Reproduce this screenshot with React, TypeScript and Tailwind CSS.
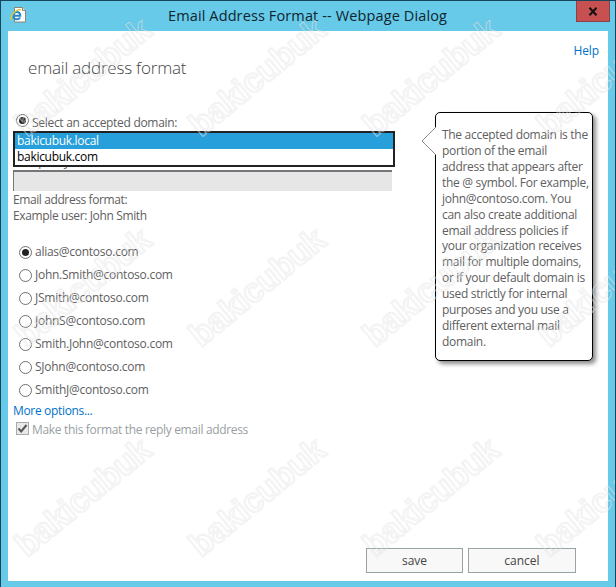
const formats = [
  "alias@contoso.com",
  "John.Smith@contoso.com",
  "JSmith@contoso.com",
  "JohnS@contoso.com",
  "Smith.John@contoso.com",
  "SJohn@contoso.com",
  "SmithJ@contoso.com",
];

const helpLines = [
  "The accepted domain is the",
  "portion of the email",
  "address that appears after",
  "the @ symbol. For example,",
  "john@contoso.com. You",
  "can also create additional",
  "email address policies if",
  "your organization receives",
  "mail for multiple domains,",
  "or if your default domain is",
  "used strictly for internal",
  "purposes and you use a",
  "different external mail",
  "domain.",
];

const Radio = ({ checked = false }: { checked?: boolean }) => (
  <svg className="shrink-0" width="13" height="13" viewBox="0 0 13 13">
    <circle cx="6.5" cy="6.5" r="6" fill="#fff" stroke="#707070" />
    {checked && <circle cx="6.5" cy="6.5" r="3.5" fill="#222" />}
  </svg>
);

const PageIcon = () => (
  <svg width="18" height="18" viewBox="0 0 18 18" fill="none">
    <path d="M4.500 1.500h8l3 3v11.500h-11z" fill="#fff" stroke="#8b8576" />
    <path d="M12.500 1.500v3h3" fill="#eee" stroke="#8b8576" />
    <path
      d="M3.500 9.700h6.800c0-2.400-1.400-3.700-3.400-3.700-2.100 0-3.500 1.400-3.500 3.700s1.400 3.600 3.500 3.600c1.500 0 2.500-.5 3.200-1.700"
      stroke="#2689cf"
      strokeWidth="2"
    />
    <path
      d="M2.200 13.800C.2 13 .8 9.700 3.800 6.700 6.800 3.900 9.900 2.900 10.900 4"
      stroke="#e5c72d"
      strokeWidth="1.500"
    />
  </svg>
);

const TitleBar = () => (
  <div className="flex h-[30px] items-start pl-[9px] pr-[5px]">
    <div className="w-[82px] pt-[5px]">
      <PageIcon />
    </div>
    <div className="flex-1 pl-[76px] pt-[4px] text-[14.500px] leading-[22px] tracking-[0.12px] text-[#10252e]">
      <span className="whitespace-nowrap">Email Address Format -- Webpage Dialog</span>
    </div>
    <button className="flex h-[21px] w-[34px] items-center justify-center border border-t-0 border-[#8b4145] bg-[#c75050]">
      <svg width="10" height="9" viewBox="0 0 10 9">
        <path d="M1.500.800l7 7.400M8.500.800l-7 7.400" stroke="#111" strokeWidth="2" />
      </svg>
    </button>
  </div>
);

const DomainForm = () => (
  <div className="w-[387px] pl-[5px] pt-[15px]">
    <label className="flex h-[16px] items-center gap-[3px] pl-[3px]">
      <span className="mb-[3px]">
        <Radio checked />
      </span>
      <span className="pt-[2px]">Select an accepted domain:</span>
    </label>
    {/* open domain list */}
    <div className="mt-px h-[36px] border-2 border-[#222] bg-white leading-4 tracking-[-0.3px]">
      <div className="h-4 bg-[#269fda] pl-0.5 text-white">bakicubuk.local</div>
      <div className="h-4 pl-0.5 text-black">bakicubuk.com</div>
    </div>
    {/* only the descenders of this label show under the list */}
    <div className="flex h-[3px] items-end overflow-hidden pl-[19px]">
      <span className="mb-[3px] leading-[10px]">Specify</span>
    </div>
    <div className="h-[21px] w-[379px] border-l border-t-2 border-[#77747a] bg-[#e6e6e6]" />
    <p className="mt-[1px] leading-4 tracking-[-0.4px]">Email address format:</p>
    <p className="leading-4 tracking-[-0.37px]">Example user: John Smith</p>
    <div className="mt-[17px] pl-[6px]">
      {formats.map((address, i) => (
        <label key={address} className="flex h-[23px] items-center gap-[3px]">
          <Radio checked={i === 0} />
          <span className="mb-px whitespace-nowrap tracking-[-0.26px]">{address}</span>
        </label>
      ))}
    </div>
    <a className="block leading-[18px] tracking-[-0.33px] text-[#0072c6]">More options...</a>
    <label className="flex h-[20px] items-center gap-[3px] pl-[3px] text-[#98a0a3]">
      <span className="mb-[4px] flex size-[13px] items-center justify-center border border-[#aaa] bg-[#e8e8e8]">
        <svg width="11" height="11" viewBox="0 0 11 11" fill="none">
          <path d="M1.500 5.500l2.700 3L9.500 2" stroke="#555" strokeWidth="2" />
        </svg>
      </span>
      <span className="whitespace-nowrap tracking-[-0.33px]">Make this format the reply email address</span>
    </label>
  </div>
);

const Callout = () => (
  <aside className="relative ml-[40px] mt-[13px] h-[249px] w-[158px] rounded-[5px] border border-black bg-white pl-[6px] pt-[14px] shadow-[3px_3px_4px_rgba(0,0,0,0.45)]">
    <svg className="absolute left-[-15px] top-[13px]" width="16" height="30" viewBox="0 0 16 30">
      <path d="M15 1L1 15l14 14" fill="#fff" stroke="#8a8a8a" />
    </svg>
    {helpLines.map((line) => (
      <p key={line} className="h-[15.930px] whitespace-nowrap leading-4 tracking-[-0.3px]">
        {line}
      </p>
    ))}
  </aside>
);

// outlined site name repeated over the whole window
const Watermark = () => (
  <svg className="pointer-events-none absolute inset-0" width="616" height="587">
    {[0, 1, 2].map((row) =>
      [0, 1, 2, 3].map((col) => (
        <g key={`${row}-${col}`} transform={`translate(${26 + col * 174} ${137 + row * 210}) rotate(-39.500)`}>
          {["#888888", "#ffffff"].map((color, i) => (
            <text
              key={color}
              textLength="164"
              lengthAdjust="spacingAndGlyphs"
              fontFamily="Liberation Sans, sans-serif"
              fontWeight="bold"
              fontSize="34"
              fill="none"
              stroke={color}
              strokeLinejoin="round"
              strokeWidth={i ? 0.9 : 2.2}
              strokeOpacity={i ? 0.5 : 0.14}
            >
              bakicubuk
            </text>
          ))}
        </g>
      ))
    )}
  </svg>
);

const App = () => {
  return (
    <div className="relative h-[587px] w-[616px] overflow-hidden border-x border-t border-[#17465c] bg-[#67cae9] font-['Open_Sans',sans-serif] text-[12px] tracking-[-0.3px] text-[#606060]">
      <TitleBar />
      <main className="ml-[7px] h-[550px] w-[600px] bg-white">
        <div className="flex h-[68px] justify-between pl-5 pr-[9px]">
          <h1 className="pt-[24px] text-[17px] font-light leading-[26px] tracking-[-0.2px] text-[#444]">email address format</h1>
          <a className="pt-[11px] leading-[18px] tracking-[-0.1px] text-[#0072c6]">Help</a>
        </div>
        <div className="flex h-[449px]">
          <DomainForm />
          <Callout />
        </div>
        <div className="flex h-[25px] gap-[5px] pl-[358px]">
          <button className="w-[97px] border border-[#98a3a6] bg-[#f8f8f8] tracking-normal text-[#444]">save</button>
          <button className="w-[108px] border border-[#98a3a6] bg-[#f8f8f8] tracking-normal text-[#444]">cancel</button>
        </div>
      </main>
      <Watermark />
    </div>
  );
};

export default App;
